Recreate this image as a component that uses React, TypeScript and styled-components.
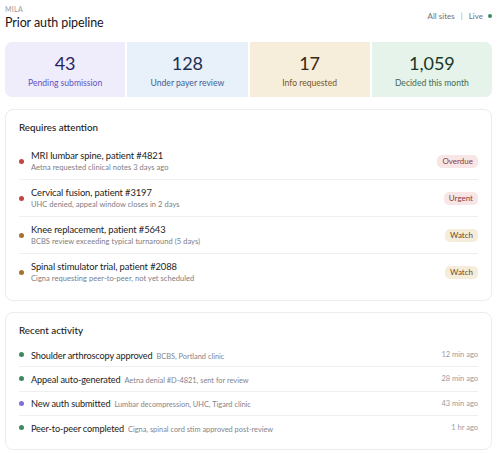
import React from 'react';
import styled, { createGlobalStyle } from 'styled-components';

const GlobalStyle = createGlobalStyle`
  body {
    margin: 0;
    background: #ffffff;
    font-family: Lato, "Noto Sans", sans-serif;
    color: #1f1f24;
  }
`;

const Page = styled.div`
  width: 487px;
  padding: 5px 0 0 5px;
`;

const Header = styled.header`
  display: flex;
  justify-content: space-between;
  align-items: center;
`;

const Brand = styled.div`
  font-size: 7px;
  letter-spacing: 0.3px;
  color: #9a9aa2;
  line-height: 8px;
`;

const Title = styled.h1`
  margin: 2px 0 0;
  font-size: 12.5px;
  letter-spacing: -0.1px;
  font-weight: 400;
  line-height: 16px;
  color: #17171c;
`;

const Scope = styled.div`
  display: flex;
  align-items: center;
  gap: 6px;
  font-size: 8px;
  color: #707078;
  margin-top: -4px;
`;

const Sep = styled.span`
  color: #a0a0a8;
`;

const LiveDot = styled.span`
  width: 4px;
  height: 4px;
  border-radius: 50%;
  background: #3d8a5f;
  margin-left: -1px;
`;

const Stats = styled.div`
  margin-top: 11px;
  display: grid;
  grid-template-columns: repeat(4, 1fr);
  gap: 2px;
  border-radius: 7px;
  overflow: hidden;
  height: 55px;
`;

const tones = {
  purple: { bg: '#efedfb', num: '#29245f', label: '#5f52c0' },
  blue: { bg: '#e8f0fa', num: '#1d2f52', label: '#3d5f95' },
  amber: { bg: '#f6eddb', num: '#3a2813', label: '#7a5524' },
  green: { bg: '#e5f3eb', num: '#183726', label: '#3f6c55' },
};

type Tone = keyof typeof tones;

const Stat = styled.div<{ $tone: Tone }>`
  background: ${(p) => tones[p.$tone].bg};
  display: flex;
  flex-direction: column;
  align-items: center;
  justify-content: center;
  gap: 4px;
  padding-top: 2px;
`;

const StatNum = styled.div<{ $tone: Tone }>`
  font-size: 18px;
  line-height: 21px;
  color: ${(p) => tones[p.$tone].num};
`;

const StatLabel = styled.div<{ $tone: Tone }>`
  font-size: 8.6px;
  line-height: 11px;
  color: ${(p) => tones[p.$tone].label};
`;

const Card = styled.section`
  margin-top: 12px;
  border: 1px solid #ececef;
  border-radius: 8px;
  padding: 10px 13px 10px;
  & + & {
    margin-top: 11px;
  }
`;

const CardTitle = styled.h2`
  margin: 0;
  font-size: 9.8px;
  font-weight: 500;
  line-height: 14px;
  color: #1a1a20;
`;

const List = styled.div<{ $offset: number }>`
  margin-top: ${(p) => p.$offset}px;
`;

const dotColors = {
  red: '#c64343',
  amber: '#a8712b',
  green: '#3f8a60',
  purple: '#7b70d6',
};

type DotColor = keyof typeof dotColors;

const Dot = styled.span<{ $color: DotColor }>`
  flex: none;
  width: 5px;
  height: 5px;
  border-radius: 50%;
  background: ${(p) => dotColors[p.$color]};
`;

const AlertRow = styled.div`
  display: flex;
  align-items: center;
  gap: 7px;
  padding: 7px 0 6px;
  border-top: 1px solid #efeff1;
  &:first-of-type {
    border-top: none;
  }
`;

const AlertText = styled.div`
  flex: 1;
  display: flex;
  flex-direction: column;
`;

const AlertTitle = styled.div`
  font-size: 9.4px;
  letter-spacing: -0.1px;
  line-height: 12px;
  color: #1c1c22;
`;

const AlertSub = styled.div`
  font-size: 7.5px;
  letter-spacing: 0.05px;
  line-height: 11px;
  color: #7c7c86;
`;

const badgeTones = {
  overdue: { bg: '#f8e6e6', fg: '#8d3a3a' },
  urgent: { bg: '#f8e6e6', fg: '#8d3a3a' },
  watch: { bg: '#f5edd9', fg: '#6b4a1f' },
};

type BadgeTone = keyof typeof badgeTones;

const Badge = styled.span<{ $tone: BadgeTone }>`
  font-size: 8px;
  line-height: 13px;
  padding: 0 5px;
  border-radius: 5px;
  background: ${(p) => badgeTones[p.$tone].bg};
  color: ${(p) => badgeTones[p.$tone].fg};
`;

const ActivityRow = styled.div`
  display: flex;
  align-items: center;
  gap: 7px;
  height: 23.3px;
  border-top: 1px solid #efeff1;
  &:first-of-type {
    border-top: none;
  }
`;

const ActivityText = styled.div`
  flex: 1;
  white-space: nowrap;
  line-height: 12px;
`;

const ActivityTitle = styled.span`
  font-size: 9.2px;
  letter-spacing: -0.15px;
  color: #1c1c22;
`;

const ActivityDetail = styled.span`
  margin-left: 4px;
  font-size: 7.4px;
  color: #84848e;
`;

const Time = styled.span`
  font-size: 7.5px;
  color: #9a9aa2;
`;

const stats: { num: string; label: string; tone: Tone }[] = [
  { num: '43', label: 'Pending submission', tone: 'purple' },
  { num: '128', label: 'Under payer review', tone: 'blue' },
  { num: '17', label: 'Info requested', tone: 'amber' },
  { num: '1,059', label: 'Decided this month', tone: 'green' },
];

const alerts: { title: string; sub: string; dot: DotColor; badge: string; tone: BadgeTone }[] = [
  { title: 'MRI lumbar spine, patient #4821', sub: 'Aetna requested clinical notes 3 days ago', dot: 'red', badge: 'Overdue', tone: 'overdue' },
  { title: 'Cervical fusion, patient #3197', sub: 'UHC denied, appeal window closes in 2 days', dot: 'red', badge: 'Urgent', tone: 'urgent' },
  { title: 'Knee replacement, patient #5643', sub: 'BCBS review exceeding typical turnaround (5 days)', dot: 'amber', badge: 'Watch', tone: 'watch' },
  { title: 'Spinal stimulator trial, patient #2088', sub: 'Cigna requesting peer-to-peer, not yet scheduled', dot: 'amber', badge: 'Watch', tone: 'watch' },
];

const activity: { title: string; detail: string; time: string; dot: DotColor }[] = [
  { title: 'Shoulder arthroscopy approved', detail: 'BCBS, Portland clinic', time: '12 min ago', dot: 'green' },
  { title: 'Appeal auto-generated', detail: 'Aetna denial #D-4821, sent for review', time: '28 min ago', dot: 'green' },
  { title: 'New auth submitted', detail: 'Lumbar decompression, UHC, Tigard clinic', time: '43 min ago', dot: 'purple' },
  { title: 'Peer-to-peer completed', detail: 'Cigna, spinal cord stim approved post-review', time: '1 hr ago', dot: 'green' },
];

const App = () => (
  <Page>
    <GlobalStyle />
    <Header>
      <div>
        <Brand>MILA</Brand>
        <Title>Prior auth pipeline</Title>
      </div>
      <Scope>
        <span>All sites</span>
        <Sep>|</Sep>
        <span>Live</span>
        <LiveDot />
      </Scope>
    </Header>

    <Stats>
      {stats.map((s) => (
        <Stat key={s.label} $tone={s.tone}>
          <StatNum $tone={s.tone}>{s.num}</StatNum>
          <StatLabel $tone={s.tone}>{s.label}</StatLabel>
        </Stat>
      ))}
    </Stats>

    <Card>
      <CardTitle>Requires attention</CardTitle>
      <List $offset={9}>
        {alerts.map((a) => (
          <AlertRow key={a.title}>
            <Dot $color={a.dot} />
            <AlertText>
              <AlertTitle>{a.title}</AlertTitle>
              <AlertSub>{a.sub}</AlertSub>
            </AlertText>
            <Badge $tone={a.tone}>{a.badge}</Badge>
          </AlertRow>
        ))}
      </List>
    </Card>

    <Card>
      <CardTitle>Recent activity</CardTitle>
      <List $offset={6}>
        {activity.map((a) => (
          <ActivityRow key={a.title}>
            <Dot $color={a.dot} />
            <ActivityText>
              <ActivityTitle>{a.title}</ActivityTitle>
              <ActivityDetail>{a.detail}</ActivityDetail>
            </ActivityText>
            <Time>{a.time}</Time>
          </ActivityRow>
        ))}
      </List>
    </Card>
  </Page>
);

export default App;
